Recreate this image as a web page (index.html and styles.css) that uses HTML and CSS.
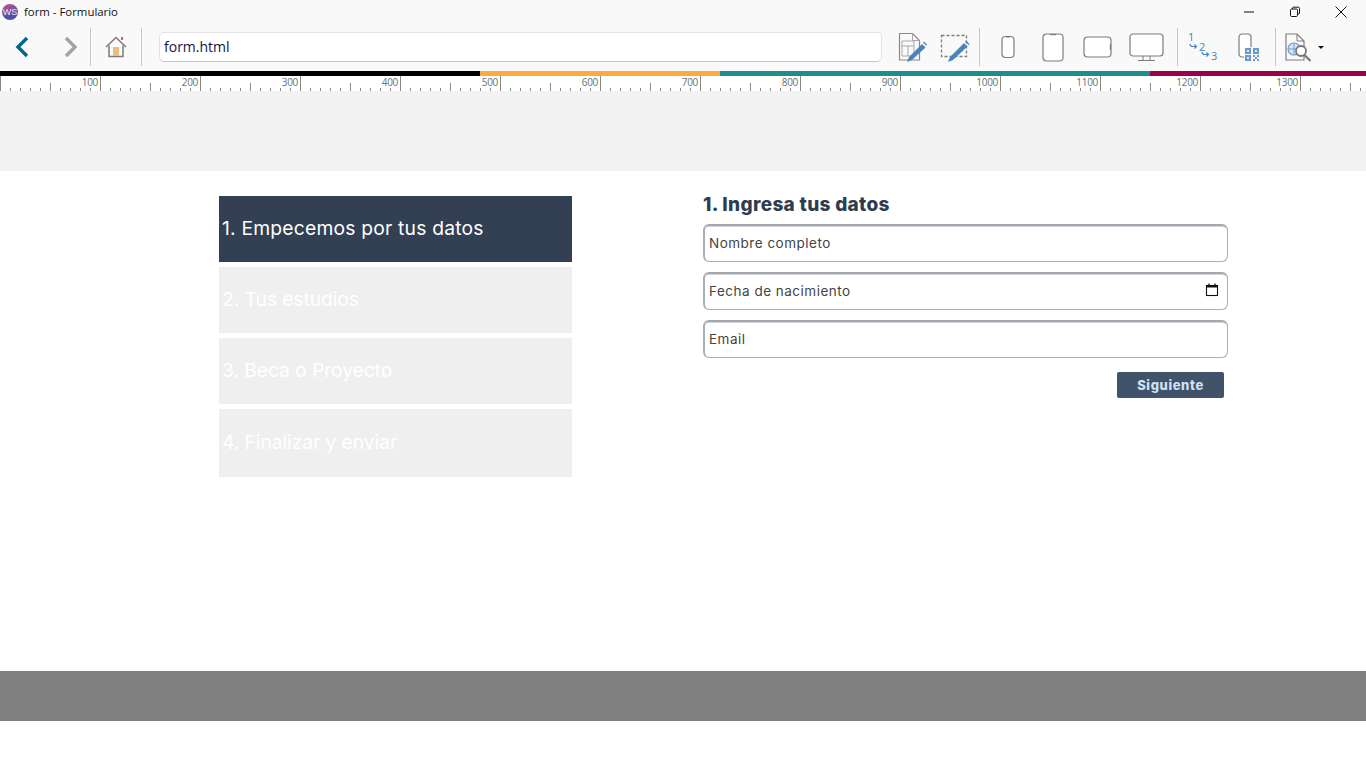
FILE: index.html
```html
<!DOCTYPE html>
<html lang="es">
<head>
<meta charset="utf-8">
<title>form - Formulario</title>
<link rel="stylesheet" href="styles.css">
</head>
<body>
<header class="titlebar">
  <div class="app-logo">WS</div>
  <div class="app-title">form - Formulario</div>
  <div class="win-controls">
    <svg class="win-icon" viewBox="0 0 12 12"><path d="M1 6h10" stroke="#111" fill="none"/></svg>
    <svg class="win-icon" viewBox="0 0 12 12"><rect x="1.500" y="3" width="7" height="7.500" rx="1.200" stroke="#111" fill="none"/><path d="M3.500 3V2.200q0-1 1-1h4.800q1.200 0 1.200 1.200V7q0 1-1 1H8.500" stroke="#111" fill="none"/></svg>
    <svg class="win-icon" viewBox="0 0 12 12"><path d="M.5.500l11 11M11.500.500l-11 11" stroke="#111" fill="none"/></svg>
  </div>
</header>
<nav class="toolbar">
  <svg class="ic ic-back" width="14" height="22" viewBox="0 0 14 22"><path d="M12 2 3 11l9 9" stroke="#00668c" stroke-width="3.400" fill="none"/></svg>
  <svg class="ic ic-fwd" width="14" height="22" viewBox="0 0 14 22"><path d="M2 2l9 9-9 9" stroke="#a3a3a3" stroke-width="3.400" fill="none"/></svg>
  <span class="sep sep-a"></span>
  <svg class="ic ic-home" width="22" height="22" viewBox="0 0 22 22"><path d="M1 11 11 1.500 21 11" stroke="#7b7b7b" stroke-width="1.500" fill="none"/><path d="M4 9.500V20.500h14V9.500" stroke="#7b7b7b" stroke-width="1.500" fill="none"/><rect x="8" y="11" width="6" height="9" fill="#e8c07c"/><rect x="16" y="1" width="2" height="3" fill="#e2603c"/></svg>
  <span class="sep sep-b"></span>
  <div class="address">form.html</div>
  <svg class="ic ic-page" width="29" height="30" viewBox="0 0 29 30"><path d="M1.500 1.500h13l7 7v19.500h-20z" stroke="#8a8a8a" stroke-width="1.200" fill="#fafafa"/><path d="M14.500 1.500v7h7M4 9h12v15H4zM4 14h12M10 14v10" stroke="#a8a8a8" fill="none"/><path d="M9 30l2-5L24 12l3.500 3.500L14 28z" fill="#4a83bd"/><path d="M25 10.500l1-1 3 3-1 1z" fill="#4a83bd"/></svg>
  <svg class="ic ic-sel" width="30" height="30" viewBox="0 0 30 30"><rect x="1.500" y="3.500" width="25" height="21" fill="none" stroke="#7d7d7d" stroke-width="1.300" stroke-dasharray="3 2"/><path d="M8 30l2-5L24 11l3.500 3.500L13 28z" fill="#4a83bd"/><path d="M25 9.500l1-1 3.500 3.500-1 1z" fill="#4a83bd"/></svg>
  <span class="sep sep-c"></span>
  <svg class="ic ic-phone" width="14" height="24" viewBox="0 0 14 24"><rect x="1" y="1.500" width="12" height="21" rx="3.500" fill="#fff" stroke="#7d7d7d" stroke-width="1.200"/><path d="M5 1.500h4v1H5z" fill="#7d7d7d"/></svg>
  <svg class="ic ic-tablet" width="22" height="29" viewBox="0 0 22 29"><rect x="1" y="1" width="20" height="27" rx="3.500" fill="#fff" stroke="#7d7d7d" stroke-width="1.200"/><path d="M8 1h6v1.200H8z" fill="#7d7d7d"/></svg>
  <svg class="ic ic-land" width="29" height="22" viewBox="0 0 29 22"><rect x="1" y="1" width="27" height="20" rx="3.500" fill="#fff" stroke="#7d7d7d" stroke-width="1.200"/><path d="M26.800 8h1.200v6h-1.200z" fill="#7d7d7d"/></svg>
  <svg class="ic ic-desk" width="35" height="29" viewBox="0 0 35 29"><rect x="1" y="1" width="33" height="22" rx="3" fill="#fff" stroke="#7d7d7d" stroke-width="1.200"/><path d="M14 23v4M21 23v4M9 27.500h17" stroke="#7d7d7d" fill="none"/></svg>
  <span class="sep sep-d"></span>
  <div class="steps-ic">
    <span class="num n1">1</span><span class="num n2">2</span><span class="num n3">3</span>
    <svg class="arrows" width="29" height="29" viewBox="0 0 29 29"><path d="M3 15q0 2.500 3 2.500h3M7.500 15.500l2 2-2 2M15 23q0 2.500 3 2.500h3M19.500 23.500l2 2-2 2" stroke="#4a83bd" stroke-width="1.200" fill="none"/></svg>
  </div>
  <svg class="ic ic-qr" width="21" height="28" viewBox="0 0 21 28"><rect x="1" y="1" width="12" height="23" rx="3" fill="#fff" stroke="#7d7d7d" stroke-width="1.200"/><path d="M6 14h15v14H6z" fill="#f9f9f9"/><path d="M7 15h6v6H7zM15 15h6v6h-6zM7 22h6v6H7zM15 22h2v2h-2zM19 22h2v2h-2zM17 24h2v2h-2zM15 26h2v2h-2zM19 26h2v2h-2z" fill="#6b9cd0"/><path d="M9 17h2v2H9zM17 17h2v2h-2zM9 24h2v2H9z" fill="#dce8f4"/></svg>
  <span class="sep sep-e"></span>
  <svg class="ic ic-search" width="27" height="29" viewBox="0 0 27 29"><path d="M1 1h11l7 7v19H1z" fill="#fafafa" stroke="#7d7d7d" stroke-width="1.200"/><path d="M12 1v7h7" fill="none" stroke="#7d7d7d"/><circle cx="9" cy="16" r="6" fill="#dbe8f4" stroke="#6b9cd0" stroke-width="1.200"/><path d="M3 16h12M9 10v12" stroke="#6b9cd0"/><circle cx="16" cy="18" r="5" fill="#fff" stroke="#777" stroke-width="1.800"/><path d="M19.500 22l6 6" stroke="#777" stroke-width="2.200"/></svg>
  <span class="caret"></span>
</nav>
<div class="colorbar">
  <span class="c-black"></span><span class="c-orange"></span><span class="c-teal"></span><span class="c-crimson"></span>
</div>
<div class="ruler">
  <span>100</span><span>200</span><span>300</span><span>400</span><span>500</span><span>600</span><span>700</span><span>800</span><span>900</span><span>1000</span><span>1100</span><span>1200</span><span>1300</span>
</div>
<div class="band"></div>
<main class="content">
  <ol class="steps">
    <li class="step active">1. Empecemos por tus datos</li>
    <li class="step">2. Tus estudios</li>
    <li class="step">3. Beca o Proyecto</li>
    <li class="step last">4. Finalizar y enviar</li>
  </ol>
  <form class="form">
    <h2 class="form-title">1. Ingresa tus datos</h2>
    <input class="field" type="text" placeholder="Nombre completo">
    <div class="date-wrap">
      <input class="field" type="text" placeholder="Fecha de nacimiento">
      <svg class="cal" width="14" height="14" viewBox="0 0 14 14"><rect x="1.500" y="2.500" width="11" height="10" fill="#fff" stroke="#111" stroke-width="1.100"/><path d="M1 2.500h12V4.500H1z" fill="#111"/><path d="M4 .5v2.500M10 .5v2.500" stroke="#111" stroke-width="1.300"/></svg>
    </div>
    <input class="field" type="text" placeholder="Email">
    <div class="actions"><button class="next" type="button">Siguiente</button></div>
  </form>
</main>
<footer class="footer"></footer>
</body>
</html>
```
FILE: styles.css
```css
* { box-sizing: border-box; }
html, body { margin: 0; padding: 0; }
body { width: 1366px; height: 768px; overflow: hidden; background: #fff; font-family: "Inter", "Liberation Sans", sans-serif; }

.titlebar { height: 23px; background: #f9f9f9; display: flex; align-items: center; padding-left: 2px; }
.app-logo { width: 16px; height: 16px; border-radius: 50%; background: linear-gradient(160deg, #c0568f, #4f4fa8 70%); color: #e8e4f4; font: 9px/16px "Liberation Sans", sans-serif; text-align: center; }
.app-title { margin-left: 6px; font: 11.400px "Open Sans", "Liberation Sans", sans-serif; color: #111; }
.win-controls { margin-left: auto; display: flex; padding-right: 19px; gap: 34px; }
.win-icon { width: 12px; height: 12px; display: block; }

.toolbar { height: 48px; background: #f9f9f9; display: flex; align-items: center; }
.ic { display: block; flex: none; }
.ic-back { margin-left: 15px; }
.ic-fwd { margin-left: 35px; }
.sep { width: 1px; height: 38px; background: #c6c6c6; flex: none; }
.sep-a { margin-left: 12px; }
.ic-home { margin-left: 14px; }
.sep-b { margin-left: 14px; }
.address { margin-left: 17px; width: 723px; height: 30px; background: #fff; border: 1px solid #e2e2e2; border-bottom-color: #c4c4c4; border-radius: 5px; padding-left: 4px; font: 14px/27px "Open Sans", "Liberation Sans", sans-serif; color: #14143c; flex: none; }
.ic-page { margin-left: 16px; }
.ic-sel { margin-left: 13px; }
.sep-c { margin-left: 9px; }
.ic-phone { margin-left: 21px; }
.ic-tablet { margin-left: 27px; }
.ic-land { margin-left: 19px; }
.ic-desk { margin-left: 17px; }
.sep-d { margin-left: 13px; }
.steps-ic { position: relative; margin-left: 10px; width: 30px; height: 30px; flex: none; color: #4a83bd; font: 11px "Open Sans", "Liberation Sans", sans-serif; }
.num { position: absolute; line-height: 12px; }
.n1 { left: 0; top: -1px; }
.n2 { left: 11px; top: 9px; }
.n3 { left: 23px; top: 18px; }
.arrows { position: absolute; left: -1px; top: -3px; }
.ic-qr { margin-left: 20px; }
.sep-e { margin-left: 16px; }
.ic-search { margin-left: 9px; }
.caret { margin-left: 6px; width: 0; height: 0; border: 3px solid transparent; border-top: 3px solid #111; border-bottom: 0; flex: none; }

.colorbar { height: 5px; display: flex; }
.c-black { width: 480px; background: #000; }
.c-orange { width: 240px; background: #fbab3f; }
.c-teal { width: 430px; background: #1a8f8c; }
.c-crimson { width: 216px; background: #9b0048; }

.ruler {
  height: 15px; display: flex; background-color: #fff;
  background-image:
    repeating-linear-gradient(to right, #8a8a8a 0 1px, transparent 1px 100px),
    repeating-linear-gradient(to right, #8a8a8a 0 1px, transparent 1px 50px),
    repeating-linear-gradient(to right, #8a8a8a 0 1px, transparent 1px 10px);
  background-repeat: no-repeat;
  background-position: 0 0, 0 bottom, 0 bottom;
  background-size: 100% 15px, 100% 8px, 100% 3px;
}
.ruler span { width: 100px; flex: none; text-align: right; padding: 0 2px 0 0; font: 10px/13px "Open Sans", "Liberation Sans", sans-serif; letter-spacing: -.3px; color: #6e6e6e; }
.band { height: 80px; background: #f2f2f2; }

.content { height: 500px; padding: 25px 0 0 219px; display: flex; align-items: flex-start; background: #fff; }
.steps { list-style: none; margin: 0; padding: 0; width: 353px; display: flex; flex-direction: column; gap: 5px; }
.step { height: 66px; background: #efefef; color: #fff; font-size: 19.300px; line-height: 64px; padding-left: 3px; letter-spacing: -.08px; }
.step.active { background: #333f52; letter-spacing: .2px; }
.step.last { height: 68px; line-height: 66px; }

.form { margin-left: 131px; width: 525px; display: flex; flex-direction: column; }
.form-title { margin: 0 0 8px; height: 20px; font-size: 19px; line-height: 17px; font-weight: 800; color: #2f3c50; letter-spacing: .31px; }
.field { display: block; width: 100%; height: 38px; margin: 0 0 10px; padding: 0 4px 2px; background: #fff; border: 1px solid #a9afb8; border-top: 2px solid #a3a8b0; border-left: 2px solid #a9adb5; border-radius: 6px; box-shadow: inset 0 1px 0 #d4d6da; font: 13.500px "Inter", sans-serif; letter-spacing: .5px; outline: none; }
.field::placeholder { color: #444; opacity: 1; }
.date-wrap { position: relative; }
.cal { position: absolute; right: 9px; top: 11px; }
.actions { display: flex; justify-content: flex-end; padding: 4px 4px 0 0; }
.next { width: 107px; height: 26px; border: 0; border-radius: 2px; background: #41526b; color: #cfe2f3; font: 800 13px "Inter", sans-serif; letter-spacing: .6px; padding: 0; }

.footer { height: 50px; background: #808080; }
```
